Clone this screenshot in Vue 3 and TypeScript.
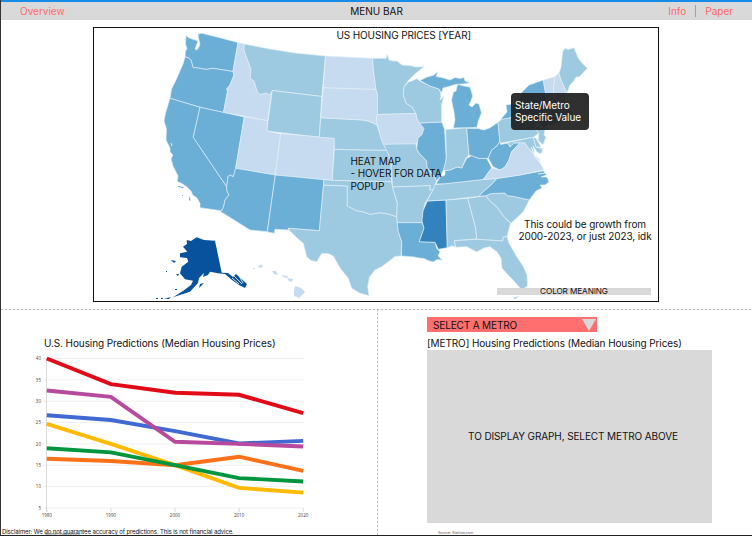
<script setup lang="ts">
interface Region {
  id: string
  tone: 'pale' | 'light' | 'mid' | 'deep' | 'dark'
  d: string
}

const regions: Region[] = [
  { id: 'WA', tone: 'mid', d: 'M186 35.5L189 38L194 39.5L198 41L197 44L195 49L197 50L200 45L199 40L198 36L201 33L219 37.5L238 42.5L233 71.5L213 68.3L206 69.5L200 68.3L193 67.5L191 60L188 57.5L185 57L185.5 51L187 49L185.5 44Z' },
  { id: 'OR', tone: 'mid', d: 'M185 57L188 57.5L191 60L193 67.5L200 68.3L206 69.5L213 68.3L233 71.5L234 75L230 85L226.7 89L227.5 91.5L223.5 112.5L200 107.3L170 98.3L171.5 89L176 80L183 64Z' },
  { id: 'ID', tone: 'pale', d: 'M238 42.5L244.3 44L244 50L246 56L251 69.3L250 78L254 81L257.3 91.7L260 94.5L266 93L270 95L272 91L267.5 120.7L244 116L223.5 112.5L227.5 91.5L226.7 89L230 85L234 75L233 71.5Z' },
  { id: 'MT', tone: 'light', d: 'M244.3 44L270 49L295 53L325.5 56L321.8 96.5L272.3 90.5L270 95L266 93L260 94.5L257.3 91.7L254 81L250 78L251 69.3L246 56L244 50Z' },
  { id: 'WY', tone: 'light', d: 'M272.3 90.5L321.8 96.5L319.3 137.3L266.7 131Z' },
  { id: 'CA', tone: 'mid', d: 'M170 98.3L200 107.3L193.3 137.3L226.7 186.7L227 191L229 195L225 200L224 205L222.7 209.3L220.7 210.7L200 207.7L200 203.3L197 198L192.7 195L191 191L186.7 186.7L181 183L177.3 181.7L178 176L173 166L171 159L173 155L170 152L170 148L166 140L166.5 129L164 121L165.5 113Z' },
  { id: 'NV', tone: 'mid', d: 'M200 107.3L244.3 117L235.7 168.3L233.3 176.7L230 175L228 176.5L227.5 181L226.7 186.7L193.3 137.3Z' },
  { id: 'UT', tone: 'pale', d: 'M244.3 116.5L267.5 120.7L266.7 131L280.7 134L275.3 175L235.7 168.3Z' },
  { id: 'CO', tone: 'pale', d: 'M280.7 133.5L334.5 138.3L332.3 180.3L300 177.7L275.3 175Z' },
  { id: 'AZ', tone: 'mid', d: 'M235.7 168.3L275.3 175L267.3 231.7L250 230L220.7 211.7L222.7 209.3L224 205L225 200L229 195L227 191L226.7 186.7L227.5 181L228 176.5L230 175L233.3 176.7Z' },
  { id: 'NM', tone: 'mid', d: 'M275.3 175L324 179.7L319.5 230.7L288.3 228.3L289 230L275 229.3L274.3 233.3L267.3 232Z' },
  { id: 'TX', tone: 'light', d: 'M323.5 185L347.3 186L347.3 206L356.7 210.7L364 212L370 214.3L380 212.7L388 214L396.7 216.7L397.3 222.7L398.3 231.7L401.7 241.7L401 256L395 256.5L390 260.5L381.7 266.7L375 270L369.5 277L367.7 286.7L369 295.7L360 293.3L351.7 288.3L348.3 278.3L340 268L333.3 256L328 253.5L321.7 253.5L316.7 261.7L311 260.5L306.7 256.7L303.3 243.3L297 238L289 230L288.3 228.3L319.3 230.7Z' },
  { id: 'OK', tone: 'light', d: 'M324 179.7L332.3 180.3L391.7 181.7L392.5 187L397.3 203L396.7 216.7L388 214L380 212.7L370 214.3L364 212L356.7 210.7L347.3 206L347.3 186L323.5 185Z' },
  { id: 'KS', tone: 'light', d: 'M334.3 149.3L386.7 150.3L389.3 156L391 161.7L391.7 181.7L332.3 180.3Z' },
  { id: 'NE', tone: 'light', d: 'M320.7 117.7L363.3 120L370 121.5L377 125L381.7 140L386.7 150.3L334.3 149.3L334.3 138.3L319.3 137.3Z' },
  { id: 'SD', tone: 'pale', d: 'M323.3 87.7L376 89.3L377.5 95L377.5 114.5L376.5 118L377.3 125L370 121.5L363.3 120L320.7 117.7Z' },
  { id: 'ND', tone: 'pale', d: 'M325.5 56L372.5 58.3L374 75L376 89.3L323.3 87.7Z' },
  { id: 'MN', tone: 'light', d: 'M372.5 58.3L386 58.3L387.3 54.3L389 60L393.3 61L397 61L402 65L410 65.5L416 67L424 66.7L416 73L408.3 80.5L404 87L403.3 95L406 103.3L412 107L416 113.5L377.5 114.5L377.5 95L376 89.3L374 75Z' },
  { id: 'IA', tone: 'pale', d: 'M377.5 114.5L416 113.5L417 119L419.5 123L424 128.5L421.7 135L418 138L416.7 144.3L383.5 144.3L381.7 140L377.3 125L376.5 118Z' },
  { id: 'MO', tone: 'light', d: 'M383.5 144.3L416 143.8L416.7 149L420 154L426.7 161L427 167L433.3 175L436.7 180.5L433.3 190L429.3 190L430.5 185.7L392.5 187L391 161.7L389.3 156Z' },
  { id: 'AR', tone: 'light', d: 'M392.5 187L430.5 185.7L429.3 190L433 190L429 197L425 203.3L423 211.7L422.3 222.7L397.3 222.7L396.7 216.7L397.3 203Z' },
  { id: 'LA', tone: 'mid', d: 'M397.3 222.7L422.3 222.7L424 228.3L419.3 241.7L435 242.3L436.7 248.3L440 252L438 256L442.5 260L437 259.5L433.3 262L428 260.5L424 258.5L419 258L414 257L401.5 256L401.7 241.7L398.3 231.7Z' },
  { id: 'MS', tone: 'deep', d: 'M427.3 201L446 200L447.3 247.7L438.3 249.3L435 242.3L419.3 241.7L424 228.3L422 221L423 211Z' },
  { id: 'AL', tone: 'light', d: 'M446 200L467.7 198.3L475.7 228L476.7 239L454.3 240.7L456 247L452 246L447.3 247.7Z' },
  { id: 'GA', tone: 'light', d: 'M467.7 198.3L485.7 195.7L490 201L497 207L503.3 216L510.5 223.3L507 236.7L503.3 237L502.7 241L476.7 239.3L475.7 228Z' },
  { id: 'FL', tone: 'light', d: 'M454.3 240.7L476.7 239.3L502.7 241L503.3 237L507 236.7L509 243L516.7 256.7L523 266L527 275L527.5 286L521.7 290L514 281L509 276L502 268.3L501 258L497 252L490 246.7L484 248L476.7 252L466.7 246.7L456 247.3Z' },
  { id: 'SC', tone: 'light', d: 'M485.7 195.7L491.7 193.5L505 193L507 195.5L515 196.7L529.3 200L523.3 211.7L511 223.3L503.3 216L497 207L490 201Z' },
  { id: 'NC', tone: 'mid', d: 'M478.3 196.3L484 191L492 184L496.7 178.5L520 175L543.3 170.7L546.5 175L541 177L547 177L549 182L545 185L540 185L542 188L536 191L529.3 200L515 196.7L507 195.5L505 193L491.7 193.5L485.7 195.7Z' },
  { id: 'TN', tone: 'light', d: 'M435 184.5L445 183.7L483.3 179.5L496.7 178.5L492 184L484 191L478.3 196.5L446 200L427 201L433 190Z' },
  { id: 'KY', tone: 'mid', d: 'M436 184L440 177L445 175L445 170.5L450 170L457 167L461.7 168L466.7 158.3L471.7 155.7L479 158.5L486.7 158.3L491.7 168L483.3 179.5L445 183.7Z' },
  { id: 'IL', tone: 'mid', d: 'M419.5 123L441.7 122L444.5 129L446.3 158L445 165L443.3 170.5L440 177L436.7 180.5L433.3 175L427 167L426.7 161L420 154L416.7 149L418 138L421.7 135L424 128.5Z' },
  { id: 'IN', tone: 'light', d: 'M445.7 129.5L466.7 127.7L469 155L466 158L461.7 168L457 167L450 170L443.3 170.5L445 165L446.3 158Z' },
  { id: 'OH', tone: 'mid', d: 'M466.7 128.3L478.3 128.5L484 130L490 127.7L498 122.3L500 141L497 146L491.7 150L488.3 158.3L479 158.5L471.7 155.7L469 155Z' },
  { id: 'WI', tone: 'light', d: 'M408.3 82L412 81L416.7 78.5L420 81L430 86L439 89L441 94L440 100L444 96L441.5 105L441.7 122L419.5 123L417 119L416 113.5L412 107L406 103.3L403.3 95L404 87Z' },
  { id: 'UP', tone: 'mid', d: 'M420 80.5L427 77L433 75.5L438 71.5L436 76.5L442 77.5L450 80L455 77.5L460 78.5L464 77.5L465 81L470 83L462 84L455 84.5L449 86.5L443 88L441.5 93L439 89L430 86Z' },
  { id: 'MI', tone: 'mid', d: 'M457.5 84.3L464 86L470 87L472.7 96L471 101L469 105L472 107L476 103L479 104L481.5 113L479 119L476.7 127.5L453.3 128L455 120L454 112L451.5 100L453.5 92L456 91Z' },
  { id: 'WV', tone: 'mid', d: 'M500 141L500.7 144.5L508 143L510 147L514 143L520 143L511.7 151.7L509 160L505 167L500 170L493.3 167L488.3 158.3L491.7 150L497 146Z' },
  { id: 'VA', tone: 'pale', d: 'M483.3 179.5L491.7 168L500 170L505 167L509 160L511.7 151.7L520 142.5L525 143L529 149L534 154L539 159L541 165L544 169.7L520 175L496.7 178.5Z' },
  { id: 'PA', tone: 'light', d: 'M498 122.3L502 119L530 114L537 121L535 129L539 133L533.3 137.3L500 143.3Z' },
  { id: 'MD', tone: 'light', d: 'M508 142.5L533.3 137.3L536 147L543 149L541 154L537 152L533 146L535 154L529 149L525 143L520 142.5L514 143L510 147Z' },
  { id: 'DE', tone: 'light', d: 'M533.3 137.3L536 138L541 147L536 147Z' },
  { id: 'NJ', tone: 'light', d: 'M537 126L545 129L544 135L546 137L543 145L538 140L539 133L535 129Z' },
  { id: 'NY', tone: 'mid', d: 'M500.5 119.5L507 112L506 105L518 103L521 93L529 85L543.3 80L547 101L549 124L544 128L530 114Z' },
  { id: 'CT', tone: 'light', d: 'M547 110L568 107L574 114L560 122L549 126Z' },
  { id: 'VT', tone: 'pale', d: 'M543.3 80L555 76.7L553.5 88L554 107L548 108Z' },
  { id: 'NH', tone: 'pale', d: 'M555 76.7L558.7 73L561 80L567 94L566 107L554 107L553.5 88Z' },
  { id: 'ME', tone: 'light', d: 'M559 73L561 67L562.7 51.7L565 48L568 49.5L574 47.7L578.3 58L582 63L587.3 68.3L582 74L579 77L576 77L574 81L570 85L567 93L561 80Z' },
  { id: 'AK', tone: 'dark', d: 'M186.7 240L191 241L196.7 237.3L204 240L215 240.7L221.7 272.7L228 273L233 277L236 274L247 284L245 288L239 285L232 280L225 274L218 273.3L210 271.7L208 275L203 277L204 273L199 278L198 283L190 291.7L183 294L173 297.3L183 291L191 285L193 280.7L185 279.3L180 273.3L181.7 266.7L188.3 261.7L187 258L180 257.3L180 253.3L187.3 251.7L183 246.7L187 244Z' },
]

const islets: { tone: string; d: string }[] = [
  { tone: 'dark', d: 'M171 260L176 261L174 263ZM176 274L179 274L178 276ZM200 284L204 283L199 288ZM171 297L169 299L164 299ZM156 298H158V299H156ZM161 298H163V299H161ZM166 271H167V272H166ZM175 289H177V290H175Z' },
  { tone: 'pale', d: 'M258 266L262 264.5L263 267L259 268ZM253 268H255V269H253ZM272 271L276 271L278 275L274 274ZM282 275L288 276L287 278L283 277ZM287 278L293 279L292 282L289 281ZM295 286L301 288L305 292L299 298L294 296L294 291Z' },
  { tone: 'light', d: 'M513 298L519 296L515 299ZM568 109L571 111L569 112Z' },
  { tone: 'mid', d: 'M178 186L184 187L183 188L178 187ZM182 195H183V196H182ZM189 196L191 201L189 200ZM199 33L200 36L198 35Z' },
]

interface Series {
  name: string
  color: string
  values: number[]
}

const series: Series[] = [
  { name: 'blue', color: '#4069d2', values: [26.7, 25.6, 23, 20.1, 20.7] },
  { name: 'red', color: '#e30a17', values: [40, 34, 32, 31.5, 27.2] },
  { name: 'yellow', color: '#ffb900', values: [24.7, 20, 15, 9.7, 8.6] },
  { name: 'orange', color: '#ff7119', values: [16.5, 16, 15, 17, 13.7] },
  { name: 'green', color: '#009640', values: [19, 18, 15, 12, 11.2] },
  { name: 'purple', color: '#b84a9e', values: [32.5, 31, 20.5, 20, 19.4] },
]

const ticks = [40, 35, 30, 25, 20, 15, 10, 5]
const years = [1980, 1990, 2000, 2010, 2020]
const xAt = (i: number): number => 16.8 + i * 64.1
const yAt = (v: number): number => 8.5 + (40 - v) * 4.27
const points = (values: number[]): string =>
  values.map((v, i) => `${xAt(i).toFixed(1)},${yAt(v).toFixed(1)}`).join(' ')
</script>

<template>
  <div class="page">
    <header class="menu">
      <nav class="side"><a class="link">Overview</a></nav>
      <span class="menu-title">MENU BAR</span>
      <nav class="side end">
        <a class="link">Info</a><i class="bar"></i><a class="link">Paper</a>
      </nav>
    </header>

    <section class="map">
      <svg class="states" viewBox="94 28 564 273" width="564" height="273">
        <path v-for="r in regions" :key="r.id" :class="['state', r.tone]" :d="r.d" />
        <path v-for="(s, i) in islets" :key="i" :class="s.tone" :d="s.d" />
        <path class="inlet" d="M234 276L242 284M239 276L243 283M232 278L239 284M171 143L172 146M531 147L536 157M534 155L540 163M538 174L545 173" />
      </svg>
      <h1 class="map-title">US HOUSING PRICES [YEAR]</h1>
      <p class="map-note">HEAT MAP<br />- HOVER FOR DATA<br />POPUP</p>
      <div class="tip">State/Metro<br />Specific Value</div>
      <p class="growth">This could be growth from<br />2000-2023, or just 2023, idk</p>
      <div class="legend"><span>COLOR MEANING</span></div>
    </section>

    <main class="panels">
      <section class="left">
        <h2 class="us-title">U.S. Housing Predictions (Median Housing Prices)</h2>
        <svg class="chart" width="290" height="172" viewBox="0 0 290 172">
          <g v-for="t in ticks" :key="t">
            <line class="grid" x1="12" x2="273.4" :y1="yAt(t)" :y2="yAt(t)" />
            <text class="tick" x="11" :y="yAt(t) + 1.7" text-anchor="end">{{ t }}</text>
          </g>
          <line class="axis" x1="16.5" x2="16.5" y1="8" y2="162" />
          <g v-for="(y, i) in years" :key="y">
            <line class="axis" :x1="xAt(i)" :x2="xAt(i)" y1="158" y2="162" />
            <text class="tick" :x="xAt(i)" y="167" text-anchor="middle">{{ y }}</text>
          </g>
          <polyline v-for="s in series" :key="s.name" class="series" :stroke="s.color" :points="points(s.values)" />
        </svg>
        <footer class="foot">
          <span class="disclaimer">Disclaimer: We do not guarantee accuracy of predictions. This is not financial advice.</span>
          <span class="source under">Source: Statista.com</span>
        </footer>
      </section>

      <div class="divider"></div>

      <section class="right">
        <button class="select">
          <span>SELECT A METRO</span>
          <svg width="14" height="12" viewBox="0 0 14 12"><path d="M0 0H14L7 12Z" fill="#d9d9d9" /></svg>
        </button>
        <h2 class="metro-title">[METRO] Housing Predictions (Median Housing Prices)</h2>
        <div class="empty">TO DISPLAY GRAPH, SELECT METRO ABOVE</div>
        <span class="source">Source: Statista.com</span>
      </section>
    </main>
  </div>
</template>

<style>
body {
  margin: 0;
  background: #fff;
}
</style>

<style scoped>
.page {
  box-sizing: border-box;
  width: 752px;
  height: 536px;
  overflow: hidden;
  display: flex;
  flex-direction: column;
  border-left: 1px solid #333;
  border-bottom: 1px solid #222;
  font-family: Inter, "Liberation Sans", sans-serif;
  font-size: 10px;
  line-height: 12px;
  color: #111;
}
h1, h2, p {
  margin: 0;
  font-weight: 400;
  font-size: inherit;
}
.menu {
  box-sizing: border-box;
  flex: none;
  height: 20px;
  display: grid;
  grid-template-columns: 1fr auto 1fr;
  align-items: center;
  padding: 0 19px 0;
  border-top: 2px solid #168be8;
  background: #d9d9d9;
}
.side {
  display: flex;
  align-items: center;
}
.end {
  justify-content: flex-end;
  gap: 9px;
}
.link {
  color: #ff6b6b;
}
.bar {
  width: 1px;
  height: 12px;
  background: #f08080;
}
.map {
  position: relative;
  box-sizing: border-box;
  flex: none;
  width: 566px;
  height: 275px;
  margin: 7px 0 0 92px;
  border: 1px solid #111;
  line-height: 12.3px;
  letter-spacing: -0.1px;
}
.states {
  display: block;
}
.state {
  stroke: #e2eff8;
  stroke-width: 0.65;
  stroke-linejoin: round;
}
.pale { fill: #c6dbef; }
.light { fill: #9ecae1; }
.mid { fill: #6baed6; }
.deep { fill: #3182bd; }
.dark { fill: #08519c; stroke: none; }
.inlet {
  fill: none;
  stroke: #fff;
  stroke-width: 0.8;
}
.map-title {
  position: absolute;
  left: 242.5px;
  top: 1px;
  letter-spacing: -0.13px;
  white-space: nowrap;
}
.map-note {
  position: absolute;
  left: 256.5px;
  top: 127px;
  white-space: nowrap;
}
.tip {
  position: absolute;
  box-sizing: border-box;
  left: 417px;
  top: 65px;
  width: 78px;
  height: 37px;
  padding: 6px 4px;
  border-radius: 4px;
  background: rgba(30, 30, 30, 0.92);
  color: #fff;
  white-space: nowrap;
}
.growth {
  position: absolute;
  left: 421px;
  top: 190px;
  width: 140px;
  text-align: center;
  white-space: nowrap;
}
.legend {
  position: absolute;
  left: 403px;
  top: 260px;
  width: 154px;
  height: 7px;
  display: flex;
  align-items: center;
  justify-content: center;
  background: #d9d9d9;
  font-size: 8.2px;
}
.panels {
  flex: 1;
  display: grid;
  grid-template-columns: 376px 1px 1fr;
  margin-top: 7px;
  background: repeating-linear-gradient(90deg, #bbb 0 2px, #eee 2px 4px) top left / 100% 1px no-repeat;
}
.divider {
  background: repeating-linear-gradient(180deg, #bbb 0 2px, #eee 2px 4px);
}
.left {
  display: flex;
  flex-direction: column;
  padding-top: 28px;
}
.us-title {
  padding-left: 43px;
  letter-spacing: -0.1px;
  white-space: nowrap;
}
.chart {
  flex: none;
  margin: 1px 0 0 29px;
}
.grid {
  stroke: #ececec;
  stroke-width: 0.8;
}
.axis {
  stroke: #ccc;
  stroke-width: 0.7;
}
.tick {
  font-family: "Open Sans", sans-serif;
  font-size: 4.5px;
  fill: #444;
}
.series {
  fill: none;
  stroke-width: 3.9;
}
.foot {
  display: grid;
  padding: 6px 0 0 1px;
  font-size: 6px;
  line-height: 8px;
}
.disclaimer,
.under {
  grid-area: 1 / 1;
  white-space: nowrap;
}
.disclaimer {
  letter-spacing: -0.11px;
}
.source {
  font-size: 3.6px;
  line-height: 5px;
  color: #555;
}
.under {
  padding: 4px 0 0 43px;
}
.right {
  display: flex;
  flex-direction: column;
  align-items: flex-start;
  padding: 8px 0 0 49px;
}
.select {
  box-sizing: border-box;
  width: 170px;
  height: 15px;
  display: flex;
  align-items: center;
  justify-content: space-between;
  padding: 0 1px 0 6px;
  border: 0;
  background: #ff6f6f;
  color: #111;
  font: inherit;
  letter-spacing: -0.14px;
}
.metro-title {
  margin-top: 5px;
  letter-spacing: -0.1px;
  white-space: nowrap;
}
.empty {
  box-sizing: border-box;
  width: 285px;
  height: 173px;
  display: flex;
  align-items: center;
  justify-content: center;
  margin-top: 1px;
  padding: 0 0 2px 7px;
  background: #d9d9d9;
  letter-spacing: -0.11px;
}
.right .source {
  margin: 8px 0 0 11px;
}
</style>
